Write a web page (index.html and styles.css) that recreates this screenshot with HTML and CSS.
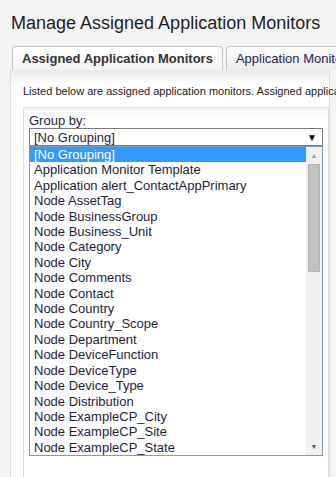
FILE: index.html
```html
<!DOCTYPE html>
<html lang="en">
<head>
    <meta charset="UTF-8">
    <title>Manage Assigned Application Monitors</title>
    <link rel="stylesheet" href="styles.css">
</head>
<body>
    <h1 class="page-title">Manage Assigned Application Monitors</h1>

    <div class="tabs">
        <div class="tab tab-active">Assigned Application Monitors</div>
        <div class="tab">Application Monitor Templates</div>
    </div>

    <div class="panel">
        <p class="intro">Listed below are assigned application monitors. Assigned application monitors are listed by node.</p>

        <div class="group-box">
            <div class="group-label">Group by:</div>
            <div class="select">
                <span>[No Grouping]</span>
                <span class="select-arrow">&#9660;</span>
            </div>
            <div class="dropdown">
                <ul class="options">
                    <li class="selected">[No Grouping]</li>
                    <li>Application Monitor Template</li>
                    <li>Application alert_ContactAppPrimary</li>
                    <li>Node AssetTag</li>
                    <li>Node BusinessGroup</li>
                    <li>Node Business_Unit</li>
                    <li>Node Category</li>
                    <li>Node City</li>
                    <li>Node Comments</li>
                    <li>Node Contact</li>
                    <li>Node Country</li>
                    <li>Node Country_Scope</li>
                    <li>Node Department</li>
                    <li>Node DeviceFunction</li>
                    <li>Node DeviceType</li>
                    <li>Node Device_Type</li>
                    <li>Node Distribution</li>
                    <li>Node ExampleCP_City</li>
                    <li>Node ExampleCP_Site</li>
                    <li>Node ExampleCP_State</li>
                </ul>
                <!-- scrollbar drawn by hand, like the old IE one -->
                <div class="scrollbar">
                    <div class="scroll-btn">&#9650;</div>
                    <div class="scroll-track">
                        <div class="scroll-thumb"></div>
                    </div>
                    <div class="scroll-btn">&#9660;</div>
                </div>
            </div>
        </div>
    </div>
</body>
</html>
```

FILE: styles.css
```css
body {
    font-family: 'Liberation Sans', Arial, sans-serif;
    background-color: #f4f4f4;
    margin: 0;
    height: 477px;
    overflow: hidden;
    display: flex;
    flex-direction: column;
    color: #222;
}

.page-title {
    font-size: 18px;
    font-weight: normal;
    color: #1e1e1e;
    margin: 13px 0 0 11px;
    line-height: 20px;
    white-space: nowrap;
}

.tabs {
    display: flex;
    gap: 3px;
    margin: 13px 0 0 12px;
    height: 24px;
    overflow: hidden;
}

.tab {
    flex-shrink: 0;
    border: 1px solid #c4c4c4;
    border-bottom: none;
    border-radius: 4px 4px 0 0;
    padding: 4px 9px 0;
    font-size: 13px;
    color: #23235a;
    background: linear-gradient(#fdfdfd, #ececec);
    white-space: nowrap;
}

.tab-active {
    font-weight: bold;
    color: #333;
    background: linear-gradient(#ffffff, #f4f4f4);
}

.panel {
    flex: 1;
    box-sizing: border-box;
    margin-left: 10px;
    width: 320px;
    border-left: 1px solid #dcdcdc;
    border-right: 1px solid #dcdcdc;
    background: linear-gradient(#e9e9e9, #ffffff 14px);
    padding: 0 0 0 12px;
    display: flex;
    flex-direction: column;
}

.intro {
    font-size: 11px;
    margin: 15px 0 0;
    line-height: 13px;
    white-space: nowrap;
    color: #222;
}

.group-box {
    flex: 1;
    margin-top: 9px;
    border: 1px solid #dedede;
    border-bottom: none;
    background: linear-gradient(#f2f2f2, #ffffff 12px);
    padding: 5px 5px 0;
}

.group-label {
    font-size: 13px;
    line-height: 15px;
    color: #1e1e3c;
}

.select {
    height: 16px;
    border: 1px solid #7a7a7a;
    background-color: #fff;
    display: flex;
    justify-content: space-between;
    align-items: center;
    padding: 0 5px 0 4px;
    font-size: 13px;
    color: #1e1e3c;
}

.select-arrow {
    font-size: 10px;
    color: #111;
}

.dropdown {
    display: flex;
    border: 1px solid #7f9db9;
    background-color: #fff;
}

.options {
    list-style: none;
    margin: 0;
    padding: 0;
    flex: 1;
}

.options li {
    font-size: 13px;
    line-height: 15.4px;
    padding-left: 4px;
    color: #1e1e3c;
    white-space: nowrap;
}

.options li.selected {
    background-color: #3399ff;
    color: #fff;
}

.scrollbar {
    width: 16px;
    display: flex;
    flex-direction: column;
    background-color: #f0f0f0;
}

.scroll-btn {
    height: 17px;
    font-size: 7px;
    color: #a0a0a0;
    text-align: center;
    line-height: 17px;
}

.scroll-btn:last-child {
    color: #555;
}

.scroll-track {
    flex: 1;
}

.scroll-thumb {
    height: 106px;
    margin: 0 2px;
    background-color: #c1c1c1;
    border: 1px solid #b3b3b3;
}
```
